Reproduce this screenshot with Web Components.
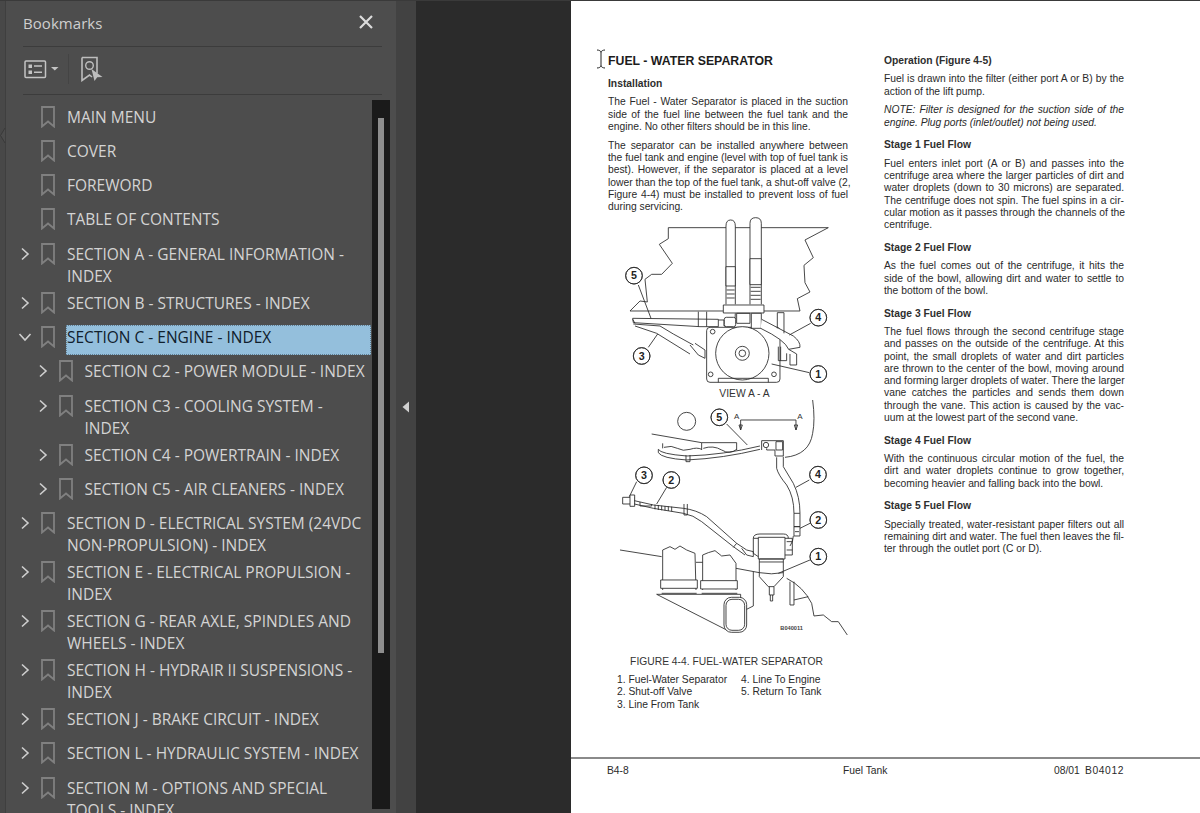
<!DOCTYPE html>
<html lang="en"><head><meta charset="utf-8"><title>Bookmarks</title>
<style>
html,body{margin:0;padding:0;height:813px;overflow:hidden;background:#2b2b2b}
</style></head>
<body>
<pdf-viewer>
  <bm-panel slot="panel">
    <bm-item>MAIN MENU</bm-item>
    <bm-item>COVER</bm-item>
    <bm-item>FOREWORD</bm-item>
    <bm-item>TABLE OF CONTENTS</bm-item>
    <bm-item state="closed">SECTION A - GENERAL INFORMATION -<br>INDEX</bm-item>
    <bm-item state="closed">SECTION B - STRUCTURES - INDEX</bm-item>
    <bm-item state="open" selected>SECTION C - ENGINE - INDEX</bm-item>
    <bm-item state="closed" level="1">SECTION C2 - POWER MODULE - INDEX</bm-item>
    <bm-item state="closed" level="1">SECTION C3 - COOLING SYSTEM -<br>INDEX</bm-item>
    <bm-item state="closed" level="1">SECTION C4 - POWERTRAIN - INDEX</bm-item>
    <bm-item state="closed" level="1">SECTION C5 - AIR CLEANERS - INDEX</bm-item>
    <bm-item state="closed">SECTION D - ELECTRICAL SYSTEM (24VDC<br>NON-PROPULSION) - INDEX</bm-item>
    <bm-item state="closed">SECTION E - ELECTRICAL PROPULSION -<br>INDEX</bm-item>
    <bm-item state="closed">SECTION G - REAR AXLE, SPINDLES AND<br>WHEELS - INDEX</bm-item>
    <bm-item state="closed">SECTION H - HYDRAIR II SUSPENSIONS -<br>INDEX</bm-item>
    <bm-item state="closed">SECTION J - BRAKE CIRCUIT - INDEX</bm-item>
    <bm-item state="closed">SECTION L - HYDRAULIC SYSTEM - INDEX</bm-item>
    <bm-item state="closed">SECTION M - OPTIONS AND SPECIAL<br>TOOLS - INDEX</bm-item>
  </bm-panel>
  <pdf-page slot="page">
    <pdf-column slot="left">
      <pdf-title>FUEL - WATER SEPARATOR</pdf-title>
      <pdf-head first>Installation</pdf-head>
      <pdf-p>
        <pdf-line>The Fuel - Water Separator is placed in the suction</pdf-line>
        <pdf-line>side of the fuel line between the fuel tank and the</pdf-line>
        <pdf-line end>engine. No other filters should be in this line.</pdf-line>
      </pdf-p>
      <pdf-p>
        <pdf-line>The separator can be installed anywhere between</pdf-line>
        <pdf-line>the fuel tank and engine (level with top of fuel tank is</pdf-line>
        <pdf-line>best). However, if the separator is placed at a level</pdf-line>
        <pdf-line>lower than the top of the fuel tank, a shut-off valve (2,</pdf-line>
        <pdf-line>Figure 4-4) must be installed to prevent loss of fuel</pdf-line>
        <pdf-line end>during servicing.</pdf-line>
      </pdf-p>
      <fuel-figure></fuel-figure>
    </pdf-column>
    <pdf-column slot="right" style="padding-top:1px">
      <pdf-head first>Operation (Figure 4-5)</pdf-head>
      <pdf-p>
        <pdf-line>Fuel is drawn into the filter (either port A or B) by the</pdf-line>
        <pdf-line end>action of the lift pump.</pdf-line>
      </pdf-p>
      <pdf-p note>
        <pdf-line>NOTE: Filter is designed for the suction side of the</pdf-line>
        <pdf-line end>engine. Plug ports (inlet/outlet) not being used.</pdf-line>
      </pdf-p>
      <pdf-head>Stage 1 Fuel Flow</pdf-head>
      <pdf-p>
        <pdf-line>Fuel enters inlet port (A or B) and passes into the</pdf-line>
        <pdf-line>centrifuge area where the larger particles of dirt and</pdf-line>
        <pdf-line>water droplets (down to 30 microns) are separated.</pdf-line>
        <pdf-line>The centrifuge does not spin. The fuel spins in a cir-</pdf-line>
        <pdf-line>cular motion as it passes through the channels of the</pdf-line>
        <pdf-line end>centrifuge.</pdf-line>
      </pdf-p>
      <pdf-head>Stage 2 Fuel Flow</pdf-head>
      <pdf-p>
        <pdf-line>As the fuel comes out of the centrifuge, it hits the</pdf-line>
        <pdf-line>side of the bowl, allowing dirt and water to settle to</pdf-line>
        <pdf-line end>the bottom of the bowl.</pdf-line>
      </pdf-p>
      <pdf-head>Stage 3 Fuel Flow</pdf-head>
      <pdf-p>
        <pdf-line>The fuel flows through the second centrifuge stage</pdf-line>
        <pdf-line>and passes on the outside of the centrifuge. At this</pdf-line>
        <pdf-line>point, the small droplets of water and dirt particles</pdf-line>
        <pdf-line>are thrown to the center of the bowl, moving around</pdf-line>
        <pdf-line>and forming larger droplets of water. There the larger</pdf-line>
        <pdf-line>vane catches the particles and sends them down</pdf-line>
        <pdf-line>through the vane. This action is caused by the vac-</pdf-line>
        <pdf-line end>uum at the lowest part of the second vane.</pdf-line>
      </pdf-p>
      <pdf-head>Stage 4 Fuel Flow</pdf-head>
      <pdf-p>
        <pdf-line>With the continuous circular motion of the fuel, the</pdf-line>
        <pdf-line>dirt and water droplets continue to grow together,</pdf-line>
        <pdf-line end>becoming heavier and falling back into the bowl.</pdf-line>
      </pdf-p>
      <pdf-head>Stage 5 Fuel Flow</pdf-head>
      <pdf-p>
        <pdf-line>Specially treated, water-resistant paper filters out all</pdf-line>
        <pdf-line>remaining dirt and water. The fuel then leaves the fil-</pdf-line>
        <pdf-line end>ter through the outlet port (C or D).</pdf-line>
      </pdf-p>
    </pdf-column>
  </pdf-page>
</pdf-viewer>
<script>
function def(name, html, extra){
  const t=document.createElement('template');t.innerHTML=html;
  customElements.define(name,class extends HTMLElement{
    constructor(){super();this.attachShadow({mode:'open'}).appendChild(t.content.cloneNode(true));}
    connectedCallback(){ if(extra) extra(this); }
  });
}
def('pdf-viewer',`<style>
:host{display:flex;width:1200px;height:813px;overflow:hidden;background:#2b2b2b;border-top:1px solid #3a3a3a;box-sizing:border-box}
.lrail{width:5px;flex:none;background:#484848;border-right:1px solid #3f3f3f;position:relative}
.lrail svg{position:absolute;left:0;top:126px}
.rrail{width:20px;flex:none;background:#424242;display:flex;align-items:center;justify-content:center;box-sizing:border-box;padding-bottom:1px}
.dark{width:155px;flex:none;background:#2b2b2b}
</style>
<div class="lrail"><svg width="6" height="18"><path d="M5 1L0.5 8.5L5 16" fill="#4d4d4d" stroke="#3a3a3a"/></svg></div>
<slot name="panel"></slot>
<div class="rrail"><svg width="8" height="12"><path d="M7 0.5V11.5L0.5 6Z" fill="#d0d0d0"/></svg></div>
<div class="dark"></div>
<slot name="page"></slot>`);

def('bm-panel',`<style>
:host{display:flex;flex-direction:column;width:390px;flex:none;background:#4d4d4d;position:relative;box-sizing:border-box;padding:0 14px 0 17px;font-family:"Open Sans","Noto Sans",sans-serif;color:#d2d2d2}
.head{display:flex;flex:none;align-items:center;justify-content:space-between;height:45px;border-bottom:1px solid #3c3c3c;box-sizing:content-box;padding-right:9px}
.title{font-size:15px;letter-spacing:.05px;color:#cfcfcf;padding-bottom:2px}
.tools{display:flex;flex:none;align-items:center;height:47px;box-sizing:border-box;padding-bottom:4px;border-bottom:1px solid #3c3c3c;box-sizing:content-box;height:43px}
.sep{width:1px;height:30px;background:#444;margin:0 12px 0 9px}
.tree{margin:4.5px 0 0 -8px;width:356px;min-height:0;display:flex;flex-direction:column}
.track{position:absolute;left:366px;top:99px;width:18px;height:709px;background:#1a1a1a}
.thumb{position:absolute;left:6px;top:18px;width:6px;height:535px;background:#8e8e8e}
</style>
<div class="head"><span class="title">Bookmarks</span>
<svg width="14" height="14" viewBox="0 0 14 14" style="margin-bottom:3px"><path d="M1 1L13 13M13 1L1 13" stroke="#dcdcdc" stroke-width="2.2"/></svg></div>
<div class="tools">
<svg width="36" height="20" viewBox="0 0 36 20"><rect x="2" y="2" width="20.5" height="16.5" fill="none" stroke="#c4c4c4" stroke-width="1.5" rx="1"/><rect x="5.5" y="5.5" width="3.5" height="3.5" fill="#c4c4c4"/><rect x="5.5" y="11.5" width="3.5" height="3.5" fill="#c4c4c4"/><path d="M11 7h8M11 13.2h8" stroke="#c4c4c4" stroke-width="1.5"/><path d="M28 8h7.5l-3.7 3.5z" fill="#c4c4c4"/></svg>
<div class="sep"></div>
<svg width="24" height="26" viewBox="0 0 24 26"><path d="M1 1.5H16V17.5M1 1.5V24.5L8.5 19L11 21" fill="none" stroke="#bdbdbd" stroke-width="1.6"/><circle cx="8.5" cy="9.5" r="3.8" fill="none" stroke="#bdbdbd" stroke-width="1.4"/><path d="M10.5 13L21.5 21L16.2 21.2L13.5 25Z" fill="#bdbdbd"/></svg>
</div>
<div class="tree"><slot></slot></div>
<div class="track"><div class="thumb"></div></div>`);

const tBm=document.createElement('template');
tBm.innerHTML=`<style>
:host{display:flex;flex:none;min-height:34.3px;box-sizing:border-box;font-size:15.5px;line-height:22px;color:#d4d4d4;white-space:nowrap}
.chev{width:20px;height:34px;flex:none;display:flex;align-items:center;justify-content:center}
.ico{width:20px;height:34px;margin-left:3px;margin-right:8px;flex:none;display:flex;align-items:center;justify-content:center}
.text{flex:1;margin:6px 0 -1px;padding:0 0 0 1px}
:host([selected]) .text{background:#94bfdc;color:#10202c;margin-top:5px;padding-top:1px;padding-bottom:6.3px;outline:1px dotted #5f7c90;outline-offset:-1px}
</style>
<div class="chev"></div>
<div class="ico"><svg width="14" height="22" viewBox="0 0 14 22"><path d="M1 1H13V20.5L7 15.5L1 20.5Z" fill="none" stroke="#808080" stroke-width="1.8"/></svg></div>
<div class="text"><slot></slot></div>`;
customElements.define('bm-item',class extends HTMLElement{
  constructor(){super();this.attachShadow({mode:'open'}).appendChild(tBm.content.cloneNode(true));}
  connectedCallback(){
    const s=this.getAttribute('state'),c=this.shadowRoot.querySelector('.chev');
    if(s==='closed')c.innerHTML='<svg width="10" height="14" viewBox="0 0 10 14"><path d="M2 1.5L8 7L2 12.5" fill="none" stroke="#cfcfcf" stroke-width="1.6"/></svg>';
    if(s==='open')c.innerHTML='<svg width="14" height="10" viewBox="0 0 14 10"><path d="M1.5 2L7 8L12.5 2" fill="none" stroke="#cfcfcf" stroke-width="1.6"/></svg>';
    if(this.getAttribute('level')==='1')this.style.paddingLeft='17.5px';
  }
});

def('pdf-page',`<style>
:host{display:flex;flex-direction:column;width:629px;flex:none;height:812px;background:#fff;font-family:"Liberation Sans",Arial,sans-serif;font-size:10.3px;line-height:12.3px;color:#2a2a2a;position:relative}
.cols{display:flex;gap:36px;padding:53px 0 0 37px;height:756px;box-sizing:border-box}
.foot{border-top:2px solid #8a8a8a;display:flex;padding:6px 0 0 36px;height:40px}
.cur{position:absolute;left:25px;top:48px}
</style>
<div class="cols"><slot name="left"></slot><slot name="right"></slot></div>
<div class="foot"><span style="width:236px">B4-8</span><span style="width:211px">Fuel Tank</span><span style="width:31px">08/01</span><span style="letter-spacing:.6px">B04012</span></div>
<svg class="cur" width="10" height="20" viewBox="0 0 10 20"><path d="M1 1C3 1 5 2 5 3.5V16.5C5 18 3 19 1 19M9 1C7 1 5 2 5 3.5M5 16.5C5 18 7 19 9 19" fill="none" stroke="#222" stroke-width="1"/></svg>`);
def('pdf-column',`<style>:host{display:block;width:240px;flex:none}</style><slot></slot>`);
def('pdf-title',`<style>:host{display:block;font-weight:700;font-size:12.3px;line-height:14px;margin-bottom:10px;color:#1c1c1c}</style><slot></slot>`);
def('pdf-head',`<style>:host{display:block;font-weight:700;margin:10.4px 0 6.1px;color:#2e2e2e}:host([first]){margin-top:0}</style><slot></slot>`);
def('pdf-p',`<style>:host{display:block;margin-bottom:6.4px}:host([note]){font-style:italic}</style><slot></slot>`);
def('pdf-line',`<style>:host{display:block;text-align:justify;text-align-last:justify;white-space:nowrap}:host([end]){text-align-last:left}</style><slot></slot>`);

function callout(x,y,n,r){return `<circle cx="${x}" cy="${y}" r="${r||25}" fill="#fff"/><circle cx="${x}" cy="${y}" r="${r||25}"/><text x="${x}" y="${y+11}" class="n">${n}</text>`;}
def('fuel-figure',`<style>
:host{display:block;width:240px;margin-top:-4.2px}
svg{display:block;overflow:visible}
.art{fill:none;stroke:#2b2b2b;stroke-width:2.6;stroke-linejoin:round}
.n{font:700 32px "Liberation Sans",sans-serif;fill:#222;stroke:none;text-anchor:middle}
.a{font:24px "Liberation Sans",sans-serif;fill:#333;stroke:none;text-anchor:middle}
.cap{text-align:center;margin:4px 0 0 -3px;color:#333}
.list{display:grid;grid-template-columns:124px auto;margin:6px 0 0 9px}
</style>
<svg width="240" height="436" viewBox="608 216 240 436">
<g class="art" transform="translate(600 216) scale(.3333)">
<path d="M205 35H378M406 35H450M484 35H685L615 72L640 125L612 148L615 200L630 228L592 248L600 285"/>
<path d="M205 35V68L178 85L217 142L185 175H155L135 190L142 258L120 255L90 285H370M490 285H600"/>
<path d="M378 265V30Q378 12 392 12Q406 12 406 30V265"/>
<path d="M450 265V22Q450 5 467 5Q484 5 484 22V265"/>
<rect x="378" y="152" width="28" height="58" fill="#fff"/><rect x="450" y="128" width="34" height="78" fill="#fff"/>
<path d="M380 222h24M380 234h24M380 246h24M452 214h30M452 226h30M452 238h30M452 250h30"/>
</g>
<g class="art" transform="translate(590 230) scale(.3333)">
<rect x="400" y="225" width="122" height="24" fill="#fff"/>
<path d="M145 165L183 265"/>
${callout(132,137,5)}
<path d="M128 265L385 268V290H330L130 278ZM128 268L135 280"/>
<path d="M385 270H402V288H425Q436 280 436 250M325 245V290M350 245V290"/>
<path d="M130 282L210 288L250 312L310 345M135 288L200 310L300 372M300 345L325 375L345 385V360L315 340"/>
<path d="M175 352L203 312"/>${callout(155,378,3)}
<rect x="350" y="292" width="220" height="165" rx="10" fill="#fff"/>
<circle cx="457" cy="370" r="80" fill="#fff"/><circle cx="457" cy="370" r="21"/><circle cx="457" cy="370" r="10"/>
<circle cx="368" cy="305" r="7"/><circle cx="362" cy="433" r="7"/><circle cx="552" cy="433" r="7"/>
<path d="M385 445H535M385 457V445M535 457V445"/>
<rect x="440" y="250" width="40" height="30"/><rect x="484" y="250" width="30" height="45" fill="#fff"/><rect x="403" y="262" width="34" height="28" rx="6" fill="#fff"/>
<path d="M515 268L610 318Q632 335 630 352L596 358Q585 330 512 295" fill="#fff"/>
<path d="M562 248V295M582 248V310M562 248H582M565 350V392H590V370M572 350V392M596 358L620 372V405H600V372"/>
<path d="M662 280L598 315"/>${callout(685,263,4)}
<path d="M658 428L545 402"/>${callout(685,432,1)}
</g>
<g class="art" transform="translate(590 400) scale(.3333)">
<circle cx="290" cy="64" r="27"/>
<path d="M410 72L472 135"/>${callout(388,52,5)}
<text x="440" y="56" class="a">A</text><text x="630" y="56" class="a">A</text>
<path d="M452 60H618M452 60V90M618 60V90M447 75H457L452 90ZM613 75H623L618 90Z"/>
<path d="M668 0Q676 60 668 100Q658 165 585 172"/>
<path d="M185 102L335 128H440V150M218 130V145M335 128V150M222 142Q245 135 262 145T300 148T335 148M340 145Q370 135 395 150T440 148"/>
<path d="M205 148Q212 162 290 168Q400 165 510 138M205 148V158Q215 175 290 180Q400 175 510 148M288 165V185H300V165"/>
<path d="M515 122H580V168H555V150H530V145M515 122V150M558 125H578V150H558ZM520 135A8 8 0 1 0 536 135A8 8 0 1 0 520 135"/>
<path d="M560 172V205Q565 225 590 255Q612 290 612 340M580 170V200L610 250Q630 290 630 340"/>
<rect x="612" y="340" width="18" height="40" fill="#fff"/>
<path d="M612 380H630V408H612ZM615 395H627M610 408Q610 425 600 438"/>
<path d="M658 240L618 262"/>${callout(684,224,4)}
<path d="M660 370L630 385"/>${callout(685,360,2)}
<path d="M140 245L118 290"/>${callout(162,226,3)}
<path d="M230 262L200 312"/>${callout(244,240,2)}
<rect x="98" y="292" width="35" height="20"/><rect x="120" y="285" width="14" height="34" fill="#fff"/>
<path d="M133 302L190 315L280 325Q320 330 350 350L440 430L470 450M133 312L190 325L280 340Q310 345 335 365L430 440L465 465"/>
<path d="M150 306V318H185V312M195 314V328M205 315V330M215 317V331M225 318V332M235 319V333M245 320V334M282 312V345H292V312"/>
<path d="M440 430L430 442M455 445L470 465L490 470V455L470 450"/>
<rect x="505" y="412" width="80" height="65" fill="#fff"/>
<path d="M490 415Q490 402 510 402H580Q595 402 595 415M490 415H505M585 415H607V465H585M490 415V460L505 470M590 425H607M590 450H607"/>
<path d="M508 477V530L535 560H552L580 530V477ZM508 486H580M508 518Q545 525 580 518"/>
<path d="M538 560V585H552V560M541 585V603H548V585"/>
<path d="M660 480L565 520"/>${callout(685,470,1)}
<path d="M218 570V450L240 440L255 448L270 438L290 450L315 460L318 570"/>
<rect x="212" y="540" width="110" height="25" fill="#fff"/>
<path d="M338 570V465L355 458L375 452L395 468L420 465L438 490V570"/>
<rect x="332" y="542" width="110" height="25" fill="#fff"/>
<path d="M90 450L215 470M318 487H338M438 505L508 518M200 583H452V600M200 583L410 690M215 580H320M335 580H442"/>
<rect x="402" y="592" width="68" height="105" rx="22" fill="#fff"/><rect x="408" y="598" width="56" height="93" rx="18"/>
<path d="M490 515V618L470 628M590 535Q640 560 665 610L672 648L700 645L725 665H745L772 705"/>
<path d="M600 545V615H612V545M612 600L655 590"/>
<text x="605" y="691" style="font:700 17px 'Liberation Sans',sans-serif;fill:#444;stroke:none;text-anchor:middle">B040011</text>
</g>
<text x="744.5" y="396.5" style="font:10.3px 'Liberation Sans',sans-serif;fill:#333;text-anchor:middle">VIEW A - A</text>
</svg>
<div class="cap">FIGURE 4-4. FUEL-WATER SEPARATOR</div>
<div class="list"><span>1. Fuel-Water Separator</span><span>4. Line To Engine</span><span>2. Shut-off Valve</span><span>5. Return To Tank</span><span>3. Line From Tank</span></div>`);
</script>
</body></html>
